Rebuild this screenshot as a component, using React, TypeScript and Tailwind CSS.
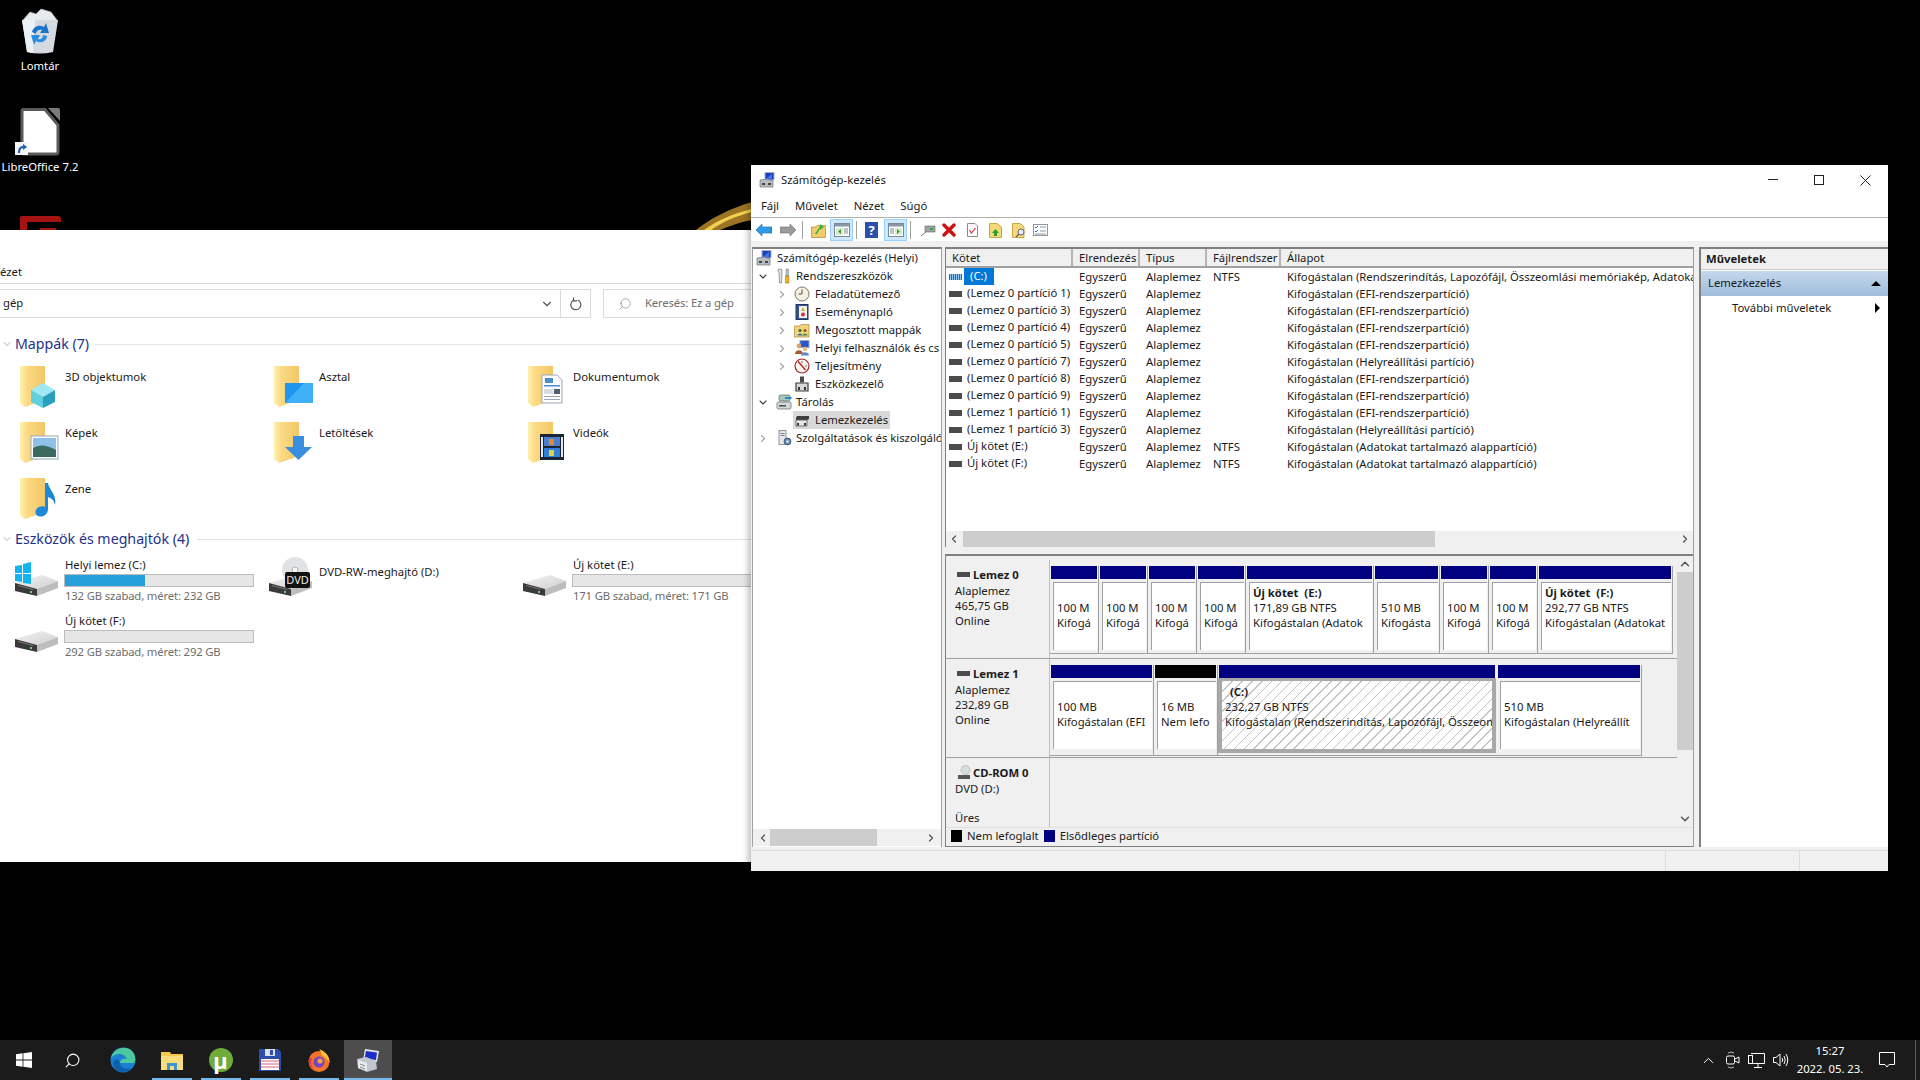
import { ChevronDown, ChevronRight, ChevronLeft, ChevronUp, Search } from "lucide-react"
import type { ReactNode } from "react"

const Folder = ({ children }: { children?: ReactNode }) => (
  <svg width="45" height="42" viewBox="0 0 45 42" className="shrink-0">
    <defs>
      <linearGradient id="fld" x1="0" x2="1" y1="0" y2="0">
        <stop offset="0" stopColor="#fff0b0" />
        <stop offset="0.3" stopColor="#fbd983" />
        <stop offset="1" stopColor="#f3c766" />
      </linearGradient>
    </defs>
    <path d="M0 0H25V34L5 41L0 37Z" fill="url(#fld)" />
    {children}
  </svg>
)

const Cube = () => (
  <g>
    <path d="M11 24L23 17L35 24L23 31Z" fill="#9fe8f5" />
    <path d="M11 24V36L23 42V31Z" fill="#5fd0e0" />
    <path d="M35 24V36L23 42V31Z" fill="#2b9fc0" />
  </g>
)
const DesktopOverlay = () => (
  <g>
    <rect x="11" y="17" width="28" height="20" fill="#1e96ee" />
    <path d="M11 37L30 17H39V37Z" fill="#3fb0f8" />
  </g>
)
const DocOverlay = () => (
  <g>
    <path d="M14 9H29L34 14V37H14Z" fill="#fdfdfd" stroke="#9aa7b5" />
    <rect x="17" y="12" width="8" height="5" fill="#4a90d0" />
    <rect x="16" y="19" width="16" height="1.5" fill="#4a90d0" />
    <rect x="16" y="23" width="9" height="5" fill="#d6dce2" />
    <rect x="26" y="23" width="6" height="5" fill="#506070" />
    <rect x="16" y="30" width="16" height="1" fill="#9aa7b5" />
    <rect x="16" y="33" width="16" height="1" fill="#9aa7b5" />
  </g>
)
const PicOverlay = () => (
  <g>
    <rect x="11" y="14" width="27" height="23" fill="#fff" stroke="#93a7bb" />
    <rect x="13" y="16" width="23" height="19" fill="#8fc1e8" />
    <path d="M13 26Q22 20 36 28V35H13Z" fill="#3d6a60" />
  </g>
)
const ArrowOverlay = () => <path d="M19 14H30V25H38L24.5 38L11 25H19Z" fill="#3a8ee0" />
const FilmOverlay = () => (
  <g>
    <rect x="12" y="12" width="24" height="26" fill="#1d2733" />
    <rect x="16" y="15" width="16" height="9" fill="#4a7fd0" />
    <rect x="16" y="26" width="16" height="9" fill="#2f80d8" />
    <rect x="21" y="17" width="5" height="6" fill="#e98a2a" />
    <rect x="21" y="28" width="5" height="6" fill="#e0d040" />
    <rect x="13" y="15" width="2" height="20" fill="#e8e8e8" />
    <rect x="33" y="15" width="2" height="20" fill="#e8e8e8" />
  </g>
)
const NoteOverlay = () => (
  <path d="M25 5L28 5C29 12 37 16 35 27C34 22 31 20 28 19V31C28 37 22 40 18 38C14 36 15 31 19 29C22 28 24 28 25 29Z" fill="#1e88d8" />
)

const DriveIcon = ({ win, dvd }: { win?: boolean; dvd?: boolean }) => (
  <svg width="50" height="42" viewBox="0 0 50 42" className="shrink-0">
    <defs>
      <linearGradient id="drvtop" x1="0" x2="1" y1="0" y2="1">
        <stop offset="0" stopColor="#f3f3f3" />
        <stop offset="1" stopColor="#cfcfcf" />
      </linearGradient>
    </defs>
    {dvd && (
      <g>
        <circle cx="26" cy="14" r="13" fill="#dfe3e6" />
        <circle cx="26" cy="14" r="3" fill="#f8f8f8" stroke="#b0b0b0" />
      </g>
    )}
    <path d="M0 27L27 19L43 25L22 33Z" fill="url(#drvtop)" />
    <path d="M22 33L43 25V32L22 40Z" fill="#bdbdbd" />
    <path d="M0 27L22 33V40L0 35Z" fill="#3a3a3a" />
    <path d="M3 29L18 33V34L3 30Z" fill="#777" />
    <rect x="15" y="35" width="2" height="2" fill="#6ed06e" />
    {win && (
      <g fill="#12b4ee">
        <path d="M0 10L7 9V17H0Z" />
        <path d="M8 8L16 6V17H8Z" />
        <path d="M0 18H7V26L0 25Z" />
        <path d="M8 18H16V28L8 27Z" />
      </g>
    )}
    {dvd && (
      <g>
        <rect x="16" y="16" width="25" height="16" rx="2" fill="#111" />
        <text x="28.5" y="28" textAnchor="middle" fontSize="11" fill="#e8e8e8">DVD</text>
      </g>
    )}
  </svg>
)

const FolderItem = ({ icon, label }: { icon: ReactNode; label: string }) => (
  <div className="flex h-[56px]">
    <Folder>{icon}</Folder>
    <span className="pt-[3px] text-[11.3px] leading-[16px] text-[#1a1a1a]">{label}</span>
  </div>
)

const DriveItem = ({ label, free, fill, win }: { label: string; free: string; fill?: string; win?: boolean }) => (
  <div className="flex h-[56px]">
    <div className="mt-[-1px]"><DriveIcon win={win} /></div>
    <div className="flex w-[190px] shrink-0 flex-col">
      <span className="text-[11.3px] leading-[16px] text-[#1a1a1a]">{label}</span>
      <div className="ml-[-1px] mt-[1px] h-[13px] w-[190px] border border-[#bcbcbc] bg-[#e6e6e6]">
        {fill && <div className={`h-full ${fill} bg-[#26a0da]`} />}
      </div>
      <span className="mt-[1px] whitespace-nowrap text-[11.3px] leading-[16px] tracking-[-0.15px] text-[#6d6d6d]">{free}</span>
    </div>
  </div>
)

const GroupHeading = ({ label, line }: { label: string; line: string }) => (
  <div className="flex h-[20px] items-center">
    <ChevronDown className="ml-[1px] mr-[2px] h-[12px] w-[12px] text-[#7a7a7a]" strokeWidth={1.2} />
    <span className="whitespace-nowrap text-[14.2px] leading-[20px] text-[#1e3287]">{label}</span>
    <div className={`h-px flex-1 bg-[#e2e2e2] ${line}`} />
  </div>
)

const Explorer = () => (
  <div className="absolute left-0 top-[230px] flex h-[632px] w-[751px] flex-col overflow-hidden bg-white">
    <div className="flex h-[54px] items-end border-b border-[#d9d9d9] pb-[3px]">
      <span className="text-[11.3px] leading-[16px] text-[#1a1a1a]">ézet</span>
    </div>
    <div className="mt-[5px] flex h-[29px] shrink-0">
      <div className="flex w-[591px] items-center border border-l-0 border-[#d9d9d9]">
        <span className="ml-[3px] flex-1 text-[11.3px] text-[#1a1a1a]">gép</span>
        <ChevronDown className="mr-[6px] h-[14px] w-[14px] text-[#555]" strokeWidth={2} />
        <div className="flex h-full w-[30px] items-center justify-center border-l border-[#d9d9d9]">
          <svg width="12" height="14" viewBox="0 0 12 14" fill="none" stroke="#555" strokeWidth="1.2">
            <path d="M7.5 3A5 5 0 1 1 3.5 3.3" />
            <path d="M3.5 0.5V3.8H7" />
          </svg>
        </div>
      </div>
      <div className="ml-[12px] flex flex-1 items-center overflow-hidden whitespace-nowrap border border-r-0 border-[#d9d9d9] pl-[14px]">
        <Search className="h-[14px] w-[14px] shrink-0 -scale-x-100 text-[#8a8a8a]" strokeWidth={1.2} />
        <span className="ml-[13px] text-[11.3px] tracking-[-0.15px] text-[#6d6d6d]">Keresés: Ez a gép</span>
      </div>
    </div>
    <div className="mt-[16px]">
      <GroupHeading label="Mappák (7)" line="ml-[6px]" />
    </div>
    <div className="mt-[12px] grid grid-cols-[254px_254px_1fr] grid-rows-[56px_56px_51px] pl-[20px]">
      <FolderItem icon={<Cube />} label="3D objektumok" />
      <FolderItem icon={<DesktopOverlay />} label="Asztal" />
      <FolderItem icon={<DocOverlay />} label="Dokumentumok" />
      <FolderItem icon={<PicOverlay />} label="Képek" />
      <FolderItem icon={<ArrowOverlay />} label="Letöltések" />
      <FolderItem icon={<FilmOverlay />} label="Videók" />
      <FolderItem icon={<NoteOverlay />} label="Zene" />
    </div>
    <GroupHeading label="Eszközök és meghajtók (4)" line="ml-[8px]" />
    <div className="mt-[8px] grid grid-cols-[254px_254px_1fr] pl-[15px]">
      <DriveItem win label="Helyi lemez (C:)" free="132 GB szabad, méret: 232 GB" fill="w-[42.5%]" />
      <div className="flex h-[56px]">
        <div className="mt-[-1px]"><DriveIcon dvd /></div>
        <span className="pt-[7px] text-[11.3px] leading-[16px] text-[#1a1a1a]">DVD-RW-meghajtó (D:)</span>
      </div>
      <DriveItem label="Új kötet (E:)" free="171 GB szabad, méret: 171 GB" />
      <DriveItem label="Új kötet (F:)" free="292 GB szabad, méret: 292 GB" />
    </div>
  </div>
)

const CompIcon = ({ size = 16 }: { size?: number }) => (
  <svg width={size} height={size} viewBox="0 0 16 16" className="shrink-0">
    <rect x="6" y="0.5" width="9" height="7.5" fill="#1c3fc0" stroke="#a8b4c4" />
    <path d="M7 7L13 1.5V7Z" fill="#3f76e6" />
    <path d="M1 8L8 7L14 9V15H1Z" fill="#b8bcc2" stroke="#70757c" strokeWidth="0.7" />
    <rect x="3" y="11" width="3" height="2" fill="#444" />
    <rect x="9" y="11" width="3" height="2" fill="#444" />
  </svg>
)
const ToolsIcon = () => (
  <svg width="16" height="16" viewBox="0 0 16 16" className="shrink-0">
    <path d="M3 1L6 1.5V4L5.5 15H3.5L3 4L1.5 2Z" fill="#dfe3e8" stroke="#707880" strokeWidth="0.7" />
    <rect x="10" y="1" width="2.4" height="7" fill="#b8c0c8" stroke="#707880" strokeWidth="0.5" />
    <rect x="9.5" y="8" width="3.4" height="7" fill="#eeb422" stroke="#9a6d00" strokeWidth="0.5" />
  </svg>
)
const ClockIcon = () => (
  <svg width="16" height="16" viewBox="0 0 16 16" className="shrink-0">
    <circle cx="8" cy="8" r="7" fill="#f4f0e2" stroke="#80786a" />
    <path d="M8 3.5V8H4.5" fill="none" stroke="#555" strokeWidth="1" />
  </svg>
)
const LogIcon = () => (
  <svg width="16" height="16" viewBox="0 0 16 16" className="shrink-0">
    <rect x="2" y="0.5" width="12" height="15" fill="#37518a" stroke="#25365a" />
    <rect x="5" y="2" width="8" height="12" fill="#eef0f4" />
    <path d="M9 3L11 7H7Z" fill="#e0b020" />
    <circle cx="9" cy="10.5" r="2" fill="#d03030" />
  </svg>
)
const SharedIcon = () => (
  <svg width="16" height="16" viewBox="0 0 16 16" className="shrink-0">
    <path d="M0.5 4H6L7 2.5H15V15H0.5Z" fill="#f2d27a" stroke="#a8893c" strokeWidth="0.7" />
    <circle cx="6" cy="8.5" r="1.6" fill="#406a34" />
    <path d="M3.5 13.5C3.5 11 8.5 11 8.5 13.5Z" fill="#2f6ea8" />
    <circle cx="11" cy="8.5" r="1.6" fill="#8a5a2a" />
    <path d="M8.5 13.5C8.5 11 13.5 11 13.5 13.5Z" fill="#3f8a4a" />
  </svg>
)
const UsersIcon = () => (
  <svg width="16" height="16" viewBox="0 0 16 16" className="shrink-0">
    <rect x="6" y="0.5" width="9" height="7" fill="#2b55c8" stroke="#9aa8b8" />
    <circle cx="5" cy="6" r="2.4" fill="#d8a468" />
    <path d="M1 14C1 9 9 9 9 14Z" fill="#a85a30" />
    <circle cx="11" cy="9" r="2.2" fill="#e2bd8a" />
    <path d="M7 15.5C7 11 15 11 15 15.5Z" fill="#5a8ac8" />
  </svg>
)
const PerfIcon = () => (
  <svg width="16" height="16" viewBox="0 0 16 16" className="shrink-0">
    <circle cx="8" cy="8" r="7" fill="#f8f6ee" stroke="#9c2a2a" strokeWidth="1.2" />
    <path d="M4 3.5L8.5 8.5L11.5 12" fill="none" stroke="#b52020" strokeWidth="1.4" />
    <path d="M8 3V5M13 8H11" stroke="#555" strokeWidth="0.8" />
  </svg>
)
const DevIcon = () => (
  <svg width="16" height="16" viewBox="0 0 16 16" className="shrink-0">
    <rect x="6" y="0.5" width="4" height="6" fill="#4a4a4a" />
    <path d="M2 7H14V15H2Z" fill="#d8d8d8" stroke="#3a3a3a" strokeWidth="1.2" />
    <rect x="4" y="11" width="2" height="3" fill="#333" />
    <rect x="10" y="11" width="2" height="3" fill="#333" />
  </svg>
)
const StorageIcon = () => (
  <svg width="16" height="16" viewBox="0 0 16 16" className="shrink-0">
    <rect x="3" y="1" width="11" height="6" rx="1.5" fill="#a8c6b8" stroke="#5a6a66" strokeWidth="0.7" />
    <rect x="9" y="3" width="6.5" height="2" fill="#2a8ad0" />
    <rect x="1" y="8" width="14" height="7" rx="1.5" fill="#d6dadc" stroke="#5a6066" strokeWidth="0.7" />
    <rect x="3" y="11" width="7" height="1.6" fill="#555" />
  </svg>
)
const DiskIcon = () => (
  <svg width="16" height="16" viewBox="0 0 16 16" className="shrink-0">
    <path d="M3 4H15V7L13 8H2V6Z" fill="#3c3c3c" />
    <path d="M2 8H13V14H2Z" fill="#e6e6e6" stroke="#555" strokeWidth="0.8" />
    <rect x="3" y="11" width="2" height="2.5" fill="#333" />
    <rect x="10" y="11" width="2" height="2.5" fill="#333" />
  </svg>
)
const ServicesIcon = () => (
  <svg width="16" height="16" viewBox="0 0 16 16" className="shrink-0">
    <rect x="3" y="0.5" width="7" height="14" fill="#e3e5e8" stroke="#7c828a" strokeWidth="0.8" />
    <rect x="4.5" y="3" width="4" height="1" fill="#7c828a" />
    <rect x="4.5" y="5" width="4" height="1" fill="#7c828a" />
    <circle cx="11.5" cy="11.5" r="3.4" fill="#6a8cb0" stroke="#3a5878" />
    <circle cx="11.5" cy="11.5" r="1.2" fill="#e8eef4" />
  </svg>
)

const treeRows = [
  { pad: "pl-[4px]", gap: "ml-[7px]", textGap: "ml-[4px]", chev: "down", icon: <ToolsIcon />, label: "Rendszereszközök" },
  { pad: "pl-[23px]", gap: "ml-[6px]", textGap: "ml-[5px]", chev: "right", icon: <ClockIcon />, label: "Feladatütemező" },
  { pad: "pl-[23px]", gap: "ml-[6px]", textGap: "ml-[5px]", chev: "right", icon: <LogIcon />, label: "Eseménynapló" },
  { pad: "pl-[23px]", gap: "ml-[6px]", textGap: "ml-[5px]", chev: "right", icon: <SharedIcon />, label: "Megosztott mappák" },
  { pad: "pl-[23px]", gap: "ml-[6px]", textGap: "ml-[5px]", chev: "right", icon: <UsersIcon />, label: "Helyi felhasználók és cs" },
  { pad: "pl-[23px]", gap: "ml-[6px]", textGap: "ml-[5px]", chev: "right", icon: <PerfIcon />, label: "Teljesítmény" },
  { pad: "pl-[23px]", gap: "ml-[6px]", textGap: "ml-[5px]", chev: "", icon: <DevIcon />, label: "Eszközkezelő" },
  { pad: "pl-[4px]", gap: "ml-[7px]", textGap: "ml-[4px]", chev: "down", icon: <StorageIcon />, label: "Tárolás" },
  { pad: "pl-[23px]", gap: "ml-[6px]", textGap: "ml-[5px]", chev: "", icon: <DiskIcon />, label: "Lemezkezelés", selected: true },
  { pad: "pl-[4px]", gap: "ml-[7px]", textGap: "ml-[4px]", chev: "right", icon: <ServicesIcon />, label: "Szolgáltatások és kiszolgáló" },
]

const Tree = () => (
  <div className="flex w-[190px] shrink-0 flex-col border-l border-t-2 border-r border-[#a0a0a0] border-t-[#808080] bg-white">
    <div className="flex-1 overflow-hidden">
      <div className="flex h-[18px] items-center pl-[3px]">
        <CompIcon />
        <span className="ml-[5px] whitespace-nowrap">Számítógép-kezelés (Helyi)</span>
      </div>
      {treeRows.map((r) => (
        <div key={r.label} className={`flex h-[18px] items-center whitespace-nowrap ${r.pad}`}>
          <span className="flex w-[12px] shrink-0 justify-center">
            {r.chev === "down" && <ChevronDown className="h-[13px] w-[13px] text-[#404040]" strokeWidth={2.2} />}
            {r.chev === "right" && <ChevronRight className="h-[13px] w-[13px] text-[#a0a0a0]" strokeWidth={2.2} />}
          </span>
          {r.selected ? (
            <div className="ml-[5px] flex h-[18px] w-[97px] shrink-0 items-center bg-[#d9d9d9] pl-[1px]">
              {r.icon}
              <span className="ml-[5px]">{r.label}</span>
            </div>
          ) : (
            <>
              <span className={r.gap}>{r.icon}</span>
              <span className={r.textGap}>{r.label}</span>
            </>
          )}
        </div>
      ))}
    </div>
    <div className="mb-[1px] flex h-[17px] shrink-0 items-center bg-[#f0f0f0]">
      <ChevronLeft className="ml-[4px] h-[12px] w-[12px] text-[#505050]" strokeWidth={2.4} />
      <div className="ml-[1px] h-full w-[107px] bg-[#cdcdcd]" />
      <div className="flex-1" />
      <ChevronRight className="mr-[4px] h-[12px] w-[12px] text-[#505050]" strokeWidth={2.4} />
    </div>
  </div>
)

const volumeRows = [
  ["(Lemez 0 partíció 1)", "", "Kifogástalan (EFI-rendszerpartíció)"],
  ["(Lemez 0 partíció 3)", "", "Kifogástalan (EFI-rendszerpartíció)"],
  ["(Lemez 0 partíció 4)", "", "Kifogástalan (EFI-rendszerpartíció)"],
  ["(Lemez 0 partíció 5)", "", "Kifogástalan (EFI-rendszerpartíció)"],
  ["(Lemez 0 partíció 7)", "", "Kifogástalan (Helyreállítási partíció)"],
  ["(Lemez 0 partíció 8)", "", "Kifogástalan (EFI-rendszerpartíció)"],
  ["(Lemez 0 partíció 9)", "", "Kifogástalan (EFI-rendszerpartíció)"],
  ["(Lemez 1 partíció 1)", "", "Kifogástalan (EFI-rendszerpartíció)"],
  ["(Lemez 1 partíció 3)", "", "Kifogástalan (Helyreállítási partíció)"],
  ["Új kötet (E:)", "NTFS", "Kifogástalan (Adatokat tartalmazó alappartíció)"],
  ["Új kötet (F:)", "NTFS", "Kifogástalan (Adatokat tartalmazó alappartíció)"],
]

const VolIcon = ({ striped }: { striped?: boolean }) => (
  <span className={`ml-[3px] h-[6px] w-[13px] shrink-0 ${striped ? "mr-[2px] bg-[repeating-linear-gradient(90deg,#1a6fb8_0,#1a6fb8_1px,#8fc4ec_1px,#8fc4ec_2px)]" : "mr-[5px] bg-[#4c4c4c]"}`} />
)

const colGrid = "grid grid-cols-[127px_67px_67px_74px_1fr]"

const VolumeList = () => (
  <div className="flex h-[298px] shrink-0 flex-col overflow-hidden border-l border-[#808080] bg-white">
    <div className={`${colGrid} h-[19px] shrink-0 border-b-2 border-[#a0a0a0] bg-[#f0f0f0]`}>
      {["Kötet", "Elrendezés", "Típus", "Fájlrendszer", "Állapot"].map((h, i) => (
        <div key={h} className={`flex items-center pl-[6px] pt-[1px] leading-[16px] ${i < 4 ? "border-r-2 border-[#b4b4b4]" : ""}`}>{h}</div>
      ))}
    </div>
    <div className="h-[263px] shrink-0">
      <div className={`${colGrid} h-[17px]`}>
        <div className="flex items-center">
          <VolIcon striped />
          <span className="flex h-[17px] w-[30px] items-center bg-[#0078d7] pl-[6px] text-white">(C:)</span>
        </div>
        <div className="pl-[6px] leading-[17px]">Egyszerű</div>
        <div className="pl-[6px] leading-[17px]">Alaplemez</div>
        <div className="pl-[6px] leading-[17px]">NTFS</div>
        <div className="overflow-hidden whitespace-nowrap pl-[6px] leading-[17px]">Kifogástalan (Rendszerindítás, Lapozófájl, Összeomlási memóriakép, Adatoka</div>
      </div>
      {volumeRows.map(([name, fs, state]) => (
        <div key={name} className={`${colGrid} h-[17px]`}>
          <div className="flex items-center whitespace-nowrap">
            <VolIcon />
            <span>{name}</span>
          </div>
          <div className="pl-[6px] leading-[17px]">Egyszerű</div>
          <div className="pl-[6px] leading-[17px]">Alaplemez</div>
          <div className="pl-[6px] leading-[17px]">{fs}</div>
          <div className="overflow-hidden whitespace-nowrap pl-[6px] leading-[17px]">{state}</div>
        </div>
      ))}
    </div>
    <div className="flex h-[16px] shrink-0 items-center bg-[#f0f0f0]">
      <ChevronLeft className="mb-[1px] ml-[2px] h-[12px] w-[12px] text-[#505050]" strokeWidth={2.4} />
      <div className="ml-[3px] h-full w-[472px] bg-[#cdcdcd]" />
      <div className="flex-1" />
      <ChevronRight className="mb-[1px] mr-[2px] h-[12px] w-[12px] text-[#505050]" strokeWidth={2.4} />
    </div>
  </div>
)

type Part = { w: string; lines: string[]; bold?: string; bar?: string }

const Partition = ({ p }: { p: Part }) => (
  <div className={`flex shrink-0 flex-col border-r border-[#a0a0a0] pb-[3px] pl-[1px] ${p.w}`}>
    <div className={`mr-[1px] h-[13px] shrink-0 ${p.bar ?? "bg-[#000080]"}`} />
    <div className="mr-[1px] mt-[3px] ml-[2px] flex h-[68px] flex-col overflow-hidden border-l border-t border-[#a0a0a0] bg-white pl-[3px] pr-[4px]">
      <div className="h-[2px] shrink-0" />
      <div className="h-[15px] shrink-0 overflow-hidden whitespace-pre font-bold leading-[15px]">{p.bold}</div>
      {p.lines.map((l) => (
        <div key={l} className="h-[15px] shrink-0 overflow-hidden whitespace-nowrap leading-[15px]">{l}</div>
      ))}
    </div>
  </div>
)

const NARROW = ["100 M", "Kifogá"]

const disk0: Part[] = [
  { w: "w-[49px]", lines: NARROW },
  { w: "w-[49px]", lines: NARROW },
  { w: "w-[49px]", lines: NARROW },
  { w: "w-[49px]", lines: NARROW },
  { w: "w-[128px]", bold: "Új kötet  (E:)", lines: ["171,89 GB NTFS", "Kifogástalan (Adatok"] },
  { w: "w-[66px]", lines: ["510 MB", "Kifogásta"] },
  { w: "w-[49px]", lines: NARROW },
  { w: "w-[49px]", lines: NARROW },
  { w: "w-[135px]", bold: "Új kötet  (F:)", lines: ["292,77 GB NTFS", "Kifogástalan (Adatokat"] },
]

const DiskHead = ({ icon, name, lines }: { icon: ReactNode; name: string; lines: string[] }) => (
  <div className="w-[104px] shrink-0 border-r border-[#c0c0c0] pl-[9px] pt-[7px]">
    <div className="flex h-[16px] items-center pl-[2px]">
      {icon}
      <span className="ml-[3px] font-bold">{name}</span>
    </div>
    {lines.map((l, i) => (
      <div key={i} className="h-[15px] leading-[15px]">{l}</div>
    ))}
  </div>
)

const SmallDisk = () => <span className="mb-[2px] h-[5px] w-[13px] bg-[#4c4c4c]" />

const DiskMap = () => (
  <div className="flex min-h-0 flex-1 flex-col border-l border-t-2 border-[#808080] border-b">
    <div className="flex min-h-0 flex-1">
      <div className="flex min-w-0 flex-1 flex-col pt-[4px]">
        <div className="flex h-[99px] shrink-0 border-b border-[#a0a0a0]">
          <DiskHead icon={<SmallDisk />} name="Lemez 0" lines={["Alaplemez", "465,75 GB", "Online"]} />
          <div className="pt-[6px]">
            <div className="flex h-[88px] border-b border-[#a0a0a0]">
              {disk0.map((p, i) => <Partition key={i} p={p} />)}
            </div>
          </div>
        </div>
        <div className="flex h-[99px] shrink-0 border-b border-[#a0a0a0]">
          <DiskHead icon={<SmallDisk />} name="Lemez 1" lines={["Alaplemez", "232,89 GB", "Online"]} />
          <div className="pt-[6px]">
            <div className="flex h-[91px] border-b border-[#a0a0a0]">
              <Partition p={{ w: "w-[104px]", lines: ["100 MB", "Kifogástalan (EFI"] }} />
              <Partition p={{ w: "w-[64px]", bar: "bg-black", lines: ["16 MB", "Nem lefo"] }} />
              <div className="flex w-[279px] shrink-0 flex-col">
                <div className="ml-[1px] mr-[2px] h-[13px] bg-[#000080]" />
                <div className="mr-[1px] flex h-[75px] flex-col overflow-hidden border-[4px] border-t-[3px] border-[#a8a8a8] bg-[repeating-linear-gradient(135deg,#c4c4c4_0,#c4c4c4_1px,#ffffff_1px,#ffffff_7px)] pl-[3px]">
                  <div className="h-[3px] shrink-0" />
                  <div className="h-[15px] shrink-0 pl-[5px] font-bold leading-[15px]">(C:)</div>
                  <div className="h-[15px] shrink-0 leading-[15px]">232,27 GB NTFS</div>
                  <div className="h-[15px] shrink-0 overflow-hidden whitespace-nowrap leading-[15px]">Kifogástalan (Rendszerindítás, Lapozófájl, Összeom</div>
                </div>
              </div>
              <Partition p={{ w: "w-[145px]", lines: ["510 MB", "Kifogástalan (Helyreállít"] }} />
            </div>
          </div>
        </div>
        <div className="flex min-h-0 flex-1">
          <div className="w-[104px] shrink-0 overflow-hidden border-r border-[#c0c0c0] pl-[9px] pt-[7px]">
            <div className="flex h-[16px] items-center pl-[2px]">
              <svg width="14" height="16" viewBox="0 0 14 16" className="shrink-0">
                <circle cx="8.5" cy="5" r="4.5" fill="#d8dcde" stroke="#a8a8a8" strokeWidth="0.6" />
                <rect x="1" y="10" width="12" height="4" fill="#555" />
              </svg>
              <span className="ml-[2px] font-bold">CD-ROM 0</span>
            </div>
            <div className="h-[15px] leading-[15px]">DVD (D:)</div>
            <div className="h-[14px]" />
            <div className="h-[15px] leading-[15px]">Üres</div>
          </div>
        </div>
      </div>
      <div className="flex w-[16px] shrink-0 flex-col items-center bg-[#f0f0f0]">
        <ChevronUp className="mt-[1px] h-[14px] w-[14px] shrink-0 text-[#505050]" strokeWidth={2.4} />
        <div className="mt-[1px] h-[178px] w-full shrink-0 bg-[#cdcdcd]" />
        <div className="flex-1" />
        <ChevronDown className="mb-[1px] h-[14px] w-[14px] shrink-0 text-[#505050]" strokeWidth={2.4} />
      </div>
    </div>
    <div className="flex h-[19px] shrink-0 items-center border-t border-[#e0e0e0] pb-[2px] pl-[5px]">
      <span className="h-[12px] w-[11px] bg-black" />
      <span className="ml-[5px]">Nem lefoglalt</span>
      <span className="ml-[5px] h-[12px] w-[11px] bg-[#000080]" />
      <span className="ml-[5px]">Elsődleges partíció</span>
    </div>
  </div>
)

const Actions = () => (
  <div className="ml-[5px] flex w-[189px] shrink-0 flex-col border-l-2 border-t-2 border-[#808080] bg-white">
    <div className="flex h-[21px] items-center border-b border-[#c8c8c8] bg-[#f0f0f0] pl-[5px] font-bold">Műveletek</div>
    <div className="mt-[1px] flex h-[25px] items-center justify-between bg-[linear-gradient(#c5d8ec,#9fbcdc)] pl-[7px] pr-[7px]">
      <span>Lemezkezelés</span>
      <span className="h-0 w-0 border-x-[5px] border-b-[5px] border-x-transparent border-b-black" />
    </div>
    <div className="flex h-[24px] items-center justify-between pl-[31px] pr-[8px]">
      <span>További műveletek</span>
      <span className="h-0 w-0 border-y-[5px] border-l-[5px] border-y-transparent border-l-black" />
    </div>
  </div>
)

const ToolBtn = ({ children, ml, active }: { children: ReactNode; ml: string; active?: boolean }) => (
  <div className={`flex h-[22px] items-center justify-center ${ml} ${active ? "w-[23px] border border-[#99d1ff] bg-[#cce8ff]" : ""}`}>{children}</div>
)
const Sep = ({ ml }: { ml: string }) => <div className={`h-[18px] w-px bg-[#a0a0a0] ${ml}`} />

const PaneIcon = ({ left }: { left?: boolean }) => (
  <svg width="16" height="14" viewBox="0 0 16 14">
    <rect x="0.5" y="0.5" width="15" height="13" fill="#fff" stroke="#7d8a96" />
    <rect x="1" y="1" width="14" height="2.5" fill="#8a98a8" />
    <rect x={left ? 2 : 7} y="5" width="7" height="7" fill="#d8ecd0" />
    <path d={left ? "M7 6V11L4 8.5Z" : "M9 6V11L12 8.5Z"} fill="#3a9a3a" />
    <path d={left ? "M10 6H14M10 8H14M10 10H14" : "M2 6H6M2 8H6M2 10H6"} stroke="#7d8a96" />
  </svg>
)

const Toolbar = () => (
  <div className="flex h-[23px] shrink-0 items-center bg-white pl-[5px] pt-[1px]">
    <ToolBtn ml="">
      <svg width="16" height="12" viewBox="0 0 16 12"><path d="M0 6L6 0V3H16V9H6V12Z" fill="#2d9ae8" stroke="#1a6cb0" strokeWidth="0.6" /></svg>
    </ToolBtn>
    <ToolBtn ml="ml-[8px]">
      <svg width="16" height="12" viewBox="0 0 16 12"><path d="M16 6L10 0V3H0V9H10V12Z" fill="#9a9a9a" stroke="#707070" strokeWidth="0.6" /></svg>
    </ToolBtn>
    <Sep ml="ml-[6px]" />
    <ToolBtn ml="ml-[8px]">
      <svg width="15" height="15" viewBox="0 0 15 15">
        <path d="M0.5 4H5L6 2.5H14.5V14.5H0.5Z" fill="#f0cc6c" stroke="#a8893c" strokeWidth="0.7" />
        <path d="M4 11L9 3V1L13 4L9 7V5.5L6 11Z" fill="#3cb03c" />
      </svg>
    </ToolBtn>
    <ToolBtn ml="ml-[4px]" active><PaneIcon left /></ToolBtn>
    <Sep ml="ml-[3px]" />
    <ToolBtn ml="ml-[8px]">
      <svg width="13" height="16" viewBox="0 0 13 16">
        <rect width="13" height="16" fill="#2a4fae" />
        <text x="6.5" y="13" textAnchor="middle" fontSize="13" fontWeight="700" fill="#fff">?</text>
      </svg>
    </ToolBtn>
    <ToolBtn ml="ml-[6px]" active><PaneIcon /></ToolBtn>
    <Sep ml="ml-[3px]" />
    <ToolBtn ml="ml-[9px]">
      <svg width="16" height="13" viewBox="0 0 16 13">
        <path d="M5 2H15V8H5Z" fill="#9aa4ac" stroke="#666" strokeWidth="0.6" />
        <rect x="10" y="4" width="3" height="2" fill="#3ca03c" />
        <path d="M6 8L1 12" stroke="#777" strokeWidth="1" />
      </svg>
    </ToolBtn>
    <ToolBtn ml="ml-[6px]">
      <svg width="14" height="14" viewBox="0 0 14 14"><path d="M2 2L12 12M12 2L2 12" stroke="#d01010" strokeWidth="3.4" strokeLinecap="round" /></svg>
    </ToolBtn>
    <ToolBtn ml="ml-[11px]">
      <svg width="11" height="14" viewBox="0 0 11 14">
        <path d="M0.5 0.5H8L10.5 3V13.5H0.5Z" fill="#fff" stroke="#8c8c8c" />
        <path d="M2.5 7L4.5 10L8.5 5" fill="none" stroke="#d03030" strokeWidth="1.2" />
      </svg>
    </ToolBtn>
    <ToolBtn ml="ml-[11px]">
      <svg width="13" height="15" viewBox="0 0 13 15">
        <path d="M0.5 0.5H8L12.5 4V14.5H0.5Z" fill="#f6d878" stroke="#c8a648" />
        <path d="M6.5 6L10 10H8V13H5V10H3Z" fill="#2aa02a" />
      </svg>
    </ToolBtn>
    <ToolBtn ml="ml-[10px]">
      <svg width="15" height="15" viewBox="0 0 15 15">
        <path d="M0.5 0.5H8L12 4V14.5H0.5Z" fill="#f6d878" stroke="#c8a648" />
        <circle cx="9" cy="9" r="3" fill="#e4eef6" stroke="#667" />
        <path d="M7 11L4 14" stroke="#667" strokeWidth="1.4" />
      </svg>
    </ToolBtn>
    <ToolBtn ml="ml-[6px]">
      <svg width="15" height="12" viewBox="0 0 15 12">
        <rect x="0.5" y="0.5" width="14" height="11" fill="#fff" stroke="#8c96a0" />
        <path d="M2 3L3 4L5 2M2 7L3 8L5 6" fill="none" stroke="#2a70c0" />
        <path d="M7 3H13M7 7H13M2 10H13" stroke="#8c96a0" />
      </svg>
    </ToolBtn>
  </div>
)

const Window = () => (
  <div className="absolute left-[751px] top-[165px] flex h-[706px] w-[1137px] flex-col overflow-hidden bg-[#f0f0f0] text-[11.3px] text-[#1a1a1a] shadow-[-3px_0_6px_rgba(0,0,0,0.25)]">
    <div className="flex h-[30px] shrink-0 items-center bg-white pl-[8px]">
      <CompIcon />
      <span className="ml-[6px]">Számítógép-kezelés</span>
      <div className="flex-1" />
      <svg width="10" height="2" viewBox="0 0 10 2" className="mr-[36px]"><rect width="10" height="1" fill="#222" /></svg>
      <svg width="10" height="10" viewBox="0 0 10 10" className="mr-[36px]"><rect x="0.5" y="0.5" width="9" height="9" fill="none" stroke="#222" /></svg>
      <svg width="11" height="11" viewBox="0 0 11 11" className="mr-[17px]"><path d="M0.5 0.5L10.5 10.5M10.5 0.5L0.5 10.5" stroke="#222" /></svg>
    </div>
    <div className="flex h-[23px] shrink-0 items-center gap-[16px] border-b border-[#b0b0b0] bg-white pl-[10px]">
      <span>Fájl</span>
      <span>Művelet</span>
      <span>Nézet</span>
      <span>Súgó</span>
    </div>
    <Toolbar />
    <div className="flex min-h-0 flex-1 pl-[1px] pr-[1px] pt-[6px]">
      <Tree />
      <div className="ml-[3px] flex w-[749px] shrink-0 flex-col border-r border-[#a0a0a0] border-t-2 border-t-[#808080]">
        <VolumeList />
        <div className="h-[7px] shrink-0" />
        <DiskMap />
      </div>
      <Actions />
    </div>
    <div className="mt-[3px] flex h-[21px] shrink-0 border-t border-[#dcdcdc]">
      <div className="w-[915px] border-r border-[#dcdcdc]" />
      <div className="w-[134px] border-r border-[#dcdcdc]" />
    </div>
  </div>
)

const Desktop = () => (
  <>
    <div className="absolute left-0 top-[8px] flex w-[80px] flex-col items-center text-white">
      <svg width="42" height="46" viewBox="0 0 42 46">
        <path d="M4 12L11 4L17 6L22 1L32 4L38 12L36 18H6Z" fill="#e8ebee" stroke="#b8bec4" strokeWidth="0.6" />
        <path d="M3 12H39L34 44Q21 47 8 44Z" fill="#d4dae0" />
        <path d="M3 12H16L14 45L8 44Z" fill="#eef1f4" />
        <path d="M13 24C14 19 20 16 25 19L27 15L30 25L21 25L23 22C20 21 17 23 17 26Z" fill="#1c74c8" />
        <path d="M28 28C28 33 22 36 17 33L15 37L12 27L21 27L19 31C22 32 24 30 24 27Z" fill="#2a8ce0" />
      </svg>
      <span className="mt-[4px] text-[11.3px] leading-[16px]">Lomtár</span>
    </div>
    <div className="absolute left-0 top-[107px] flex w-[80px] flex-col items-center text-white">
      <div className="relative h-[49px] w-[42px]">
        <svg width="42" height="49" viewBox="0 0 42 49">
          <path d="M3 2.5H26L39 18V45Q39 47 37 47H5Q3 47 3 45V4Q3 2.5 5 2.5Z" fill="#fff" stroke="#5a5a5a" strokeWidth="3" />
          <path d="M29 1H39Q41 1 41 3V14Z" fill="#7a7a7a" />
        </svg>
        <svg width="13" height="13" viewBox="0 0 13 13" className="absolute bottom-[1px] left-[-4px]">
          <rect width="13" height="13" fill="#f4f4f4" />
          <path d="M3 11C3 6 5 4 8 4V2L12 5L8 8V6C6 6 5 8 5 11Z" fill="#1c5fb0" />
        </svg>
      </div>
      <span className="mt-[3px] text-[11.3px] leading-[16px]">LibreOffice 7.2</span>
    </div>
    <svg width="42" height="14" viewBox="0 0 42 14" className="absolute left-[20px] top-[216px]">
      <path d="M0 14V2Q0 0 2 0H38Q41 0 41 3V6H7V14Z" fill="#a51212" />
      <path d="M20 14V12H36V14Z" fill="#a51212" />
    </svg>
    <svg width="60" height="32" viewBox="0 0 60 32" className="absolute left-[692px] top-[198px]">
      <path d="M4 32C16 22 36 11 60 4V22C48 24 38 28 28 32Z" fill="#9c7424" />
      <path d="M12 32C24 23 42 15 60 11V14C44 18 30 24 19 32Z" fill="#f4d050" />
    </svg>
  </>
)

const Taskbar = () => (
  <div className="absolute bottom-0 left-0 flex h-[40px] w-[1920px] bg-[#1b1b1b] text-white">
    <div className="flex w-[48px] items-center justify-center">
      <svg width="16" height="16" viewBox="0 0 16 16" fill="#fff">
        <path d="M0 2.2L6.6 1.3V7.6H0Z" />
        <path d="M7.4 1.2L16 0V7.6H7.4Z" />
        <path d="M0 8.4H6.6V14.7L0 13.8Z" />
        <path d="M7.4 8.4H16V16L7.4 14.8Z" />
      </svg>
    </div>
    <div className="flex w-[48px] items-center justify-center">
      <Search className="h-[17px] w-[17px] -scale-x-100 text-white" strokeWidth={1.5} />
    </div>
    <div className="ml-[2px] flex w-[49px] items-center justify-center">
      <svg width="26" height="26" viewBox="0 0 26 26">
        <circle cx="13" cy="13" r="12.5" fill="#1a7fd0" />
        <path d="M1 11C3 2 14 -2 21 3C26 7 26 14 24 16H10C10 12 14 11 17 12C14 6 6 5 1 11Z" fill="#4cc8a0" />
        <path d="M10 16C10 21 16 23 21 21C16 27 7 26 4 20C2 16 4 13 7 12C8 13 9 14 10 16Z" fill="#0f5fa8" />
      </svg>
    </div>
    <div className="flex w-[49px] items-center justify-center">
      <svg width="22" height="20" viewBox="0 0 22 20">
        <path d="M0 2H9L10 4H22V20H0Z" fill="#f5c84c" />
        <path d="M0 6H22V20H0Z" fill="#fbdc7c" />
        <path d="M6 20V13H16V20H13V16H9V20Z" fill="#3a94d8" />
      </svg>
    </div>
    <div className="flex w-[49px] items-center justify-center">
      <span className="flex h-[24px] w-[24px] items-center justify-center rounded-full bg-[#6fac3a] text-[22px] font-bold leading-none text-white">µ</span>
    </div>
    <div className="flex w-[49px] items-center justify-center">
      <svg width="24" height="24" viewBox="0 0 24 24">
        <path d="M1 2Q1 1 2 1H20L23 4V22Q23 23 22 23H2Q1 23 1 22Z" fill="#2c4ea8" />
        <rect x="7" y="1" width="10" height="7" fill="#d8e0ee" />
        <rect x="12" y="2" width="3" height="5" fill="#2c4ea8" />
        <rect x="3" y="11" width="18" height="11" fill="#fff" />
        <path d="M3 13H21M3 16H21M3 19H21" stroke="#e05c7c" strokeWidth="1" />
      </svg>
    </div>
    <div className="flex w-[49px] items-center justify-center">
      <svg width="24" height="24" viewBox="0 0 24 24">
        <circle cx="12" cy="13.5" r="10.5" fill="#f4742a" />
        <path d="M12 1C15 4 13 6 16 8C19 10 22 12 22.5 15C23 10 20 4 12 1Z" fill="#ffc22e" />
        <path d="M2 10C1 14 3 20 8 22C4 19 3 14 5 10Z" fill="#e8304c" />
        <circle cx="12" cy="14" r="5.5" fill="#7342c8" />
        <circle cx="13" cy="13" r="2.6" fill="#f8a040" />
      </svg>
    </div>
    <div className="ml-[1px] flex w-[48px] items-center justify-center bg-[#4d4d4d]">
      <svg width="25" height="24" viewBox="0 0 25 24">
        <path d="M9 1L23 3L21 14L7 12Z" fill="#e4e8ee" />
        <path d="M10 3L21 4.5L20 12L8.5 10.5Z" fill="#1c30c8" />
        <path d="M1 11L10 9L20 13L21 21L11 24L2 20Z" fill="#c0c6ce" />
        <path d="M2 12L11 15V23L2 20Z" fill="#e8ecf0" />
        <path d="M4 16L9 18M4 19L9 21" stroke="#808890" />
      </svg>
    </div>
    <div className="flex-1" />
    <ChevronUp className="my-auto mr-[9px] h-[17px] w-[17px] text-white" strokeWidth={1.4} />
    <div className="my-auto mr-[8px]">
      <svg width="14" height="18" viewBox="0 0 14 18" fill="none" stroke="#fff" strokeWidth="1">
        <rect x="0.5" y="5" width="8" height="8" rx="1.5" />
        <path d="M9 8L13 6V12L9 10" />
        <path d="M2 2Q5 0 8 2M2 16Q5 18 8 16" stroke="#b8b8b8" />
      </svg>
    </div>
    <div className="my-auto mr-[8px]">
      <svg width="17" height="15" viewBox="0 0 17 15" fill="none" stroke="#fff" strokeWidth="1">
        <path d="M3 0.5H16.5V10.5H3M6 14.5H14M10 10.5V14.5" />
        <rect x="0.5" y="2.5" width="4" height="8" fill="#1b1b1b" />
      </svg>
    </div>
    <div className="my-auto mr-[5px]">
      <svg width="16" height="14" viewBox="0 0 16 14" fill="none" stroke="#fff" strokeWidth="1">
        <path d="M0.5 4.5H3L7 1V13L3 9.5H0.5Z" />
        <path d="M9 5Q10.5 7 9 9M11 3Q13.5 7 11 11M13 1Q16.5 7 13 13" />
      </svg>
    </div>
    <div className="flex w-[72px] flex-col items-center justify-center text-[11.3px] leading-[18px]">
      <span>15:27</span>
      <span className="whitespace-nowrap">2022. 05. 23.</span>
    </div>
    <div className="ml-[5px] flex w-[32px] items-center justify-center">
      <svg width="16" height="16" viewBox="0 0 16 16" fill="none" stroke="#fff" strokeWidth="1"><path d="M0.5 0.5H15.5V12.5H10L8 15L6 12.5H0.5Z" /></svg>
    </div>
    <div className="ml-[12px] w-[5px] border-l border-[#5a5a5a]" />
  </div>
)

const underlines = ["w-[40px] ml-[152px]", "w-[40px] ml-[9px]", "w-[40px] ml-[9px]", "w-[40px] ml-[9px]", "w-[48px] ml-[5px]"]

export default function App() {
  return (
    <div className="relative h-[1080px] w-[1920px] overflow-hidden bg-black font-['Noto_Sans',sans-serif]">
      <Desktop />
      <Explorer />
      <Window />
      <Taskbar />
      <div className="absolute bottom-0 left-0 flex h-[2px]">
        {underlines.map((u) => <div key={u} className={`h-[2px] bg-[#76b9ed] ${u}`} />)}
      </div>
    </div>
  )
}
